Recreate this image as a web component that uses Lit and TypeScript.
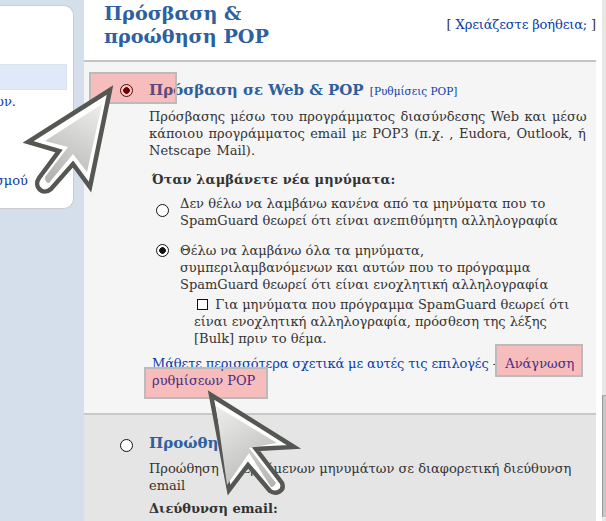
import { LitElement, html, css, svg } from "lit";
import { customElement } from "lit/decorators.js";

function arrow(outline: string, inner: string, g: string) {
  return svg`
    <path d=${outline} fill="#fff" stroke="#555753" stroke-width="4.5" stroke-linejoin="miter" stroke-miterlimit="10"></path>
    <path d=${inner} fill=${`url(#${g})`}></path>`;
}

@customElement("app-root")
export class AppRoot extends LitElement {
  static styles = css`
    :host { display: block; width: 606px; height: 521px; position: relative; overflow: hidden; font-family: "DejaVu Serif", serif; font-size: 13px; line-height: 17px; color: #333; background: #fff; }
    * { box-sizing: border-box; }
    .page { display: flex; height: 521px; }
    .side { width: 84px; flex: none; background: #d5deeb; padding-top: 5px; overflow: hidden; }
    .card { width: 74px; height: 204px; background: #fff; border: 1px solid #ccc; border-left: 0; border-radius: 0 10px 10px 0; padding-top: 58px; overflow: hidden; }
    .sel { width: 67px; height: 26px; background: #e0e9fa; border: 1px solid #dce3ee; border-left: 0; }
    .s1 { display: flex; justify-content: flex-end; padding-right: 57px; margin-top: 3px; color: #0a3aa8; white-space: nowrap; }
    .s2 { display: flex; justify-content: flex-end; margin-top: 62px; padding-right: 45px; color: #0a3aa8; white-space: nowrap; }
    .main { width: 512px; flex: none; display: flex; flex-direction: column; }
    .head { height: 62px; display: flex; justify-content: space-between; align-items: flex-start; padding: 0 0 0 20px; border-bottom: 2px solid #c4c4c4; }
    h1 { margin: 0; font-size: 19.2px; line-height: 23px; font-weight: bold; color: #2e5f9f; width: 190px; padding-top: 2px; }
    .help { white-space: nowrap; color: #333; margin-top: 16px; letter-spacing: -0.14px; }
    a { color: #0a3aa8; text-decoration: none; }
    .sec { display: grid; grid-template-columns: 65px 1fr; }
    .one { height: 353px; background: #f5f5f5; border-bottom: 2px solid #c9c9c9; padding-top: 19px; }
    .two { flex: 1; background: #e5e5e5; padding-top: 19px; }
    .rad { appearance: none; margin: 0; width: 13px; height: 13px; border: 1.5px solid #111; border-radius: 50%; background: #fff; display: block; }
    .rad.on { background: radial-gradient(circle, #111 0 3px, #fff 3.6px); }
    .rad.dark { background: radial-gradient(circle, #400 0 3px, #fff 3.6px); margin-top: 1px; }
    .rad.off2 { margin-top: 3px; }
    .cellr { padding-left: 36px; padding-top: 2px; }
    h2 { margin: 0; font-size: 15px; line-height: 18px; font-weight: bold; color: #2e5f9f; white-space: nowrap; }
    h2 a { font-size: 10.5px; font-weight: normal; margin-left: 1px; }
    p { margin: 0; }
    .desc { margin-top: 8px; padding-right: 12px; }
    .one .desc { word-spacing: 1.3px; padding-right: 0; }
    .two .desc { margin-top: 8px; }
    .when { margin: 12px 0 0 3px; font-weight: bold; letter-spacing: 0.1px; }
    .opt { display: flex; margin-top: 7px; padding-left: 7px; gap: 11px; align-items: flex-start; padding-right: 12px; }
    .opt .rad { margin-top: 2px; flex: none; }
    .opt.first .rad { margin-top: 9px; }
    .opt.second { margin-top: 13px; }
    .chk { margin: 3px 0 0 45px; padding-right: 24px; }
    .box { display: inline-block; width: 11px; height: 11px; border: 1px solid #111; background: #fff; vertical-align: -1px; margin: 0 3px; }
    .more { margin: 8px 0 0 3px; padding-right: 12px; }
    .more .lead { letter-spacing: -0.13px; }
    .more .read { margin-left: 4px; }
    .label { margin-top: 6px; font-weight: bold; }
    .gut { width: 6px; flex: none; background: #fff; }
    .track { width: 4px; flex: none; background: #e8e8e8; padding-top: 395px; }
    .thumb { height: 122px; background: #c8c8c8; border-left: 1px solid #999; border-top: 1px solid #aaa; }
    .hl { position: absolute; background: rgba(255, 0, 0, 0.23); border: 2px solid #bbb; }
    .hl1 { left: 89px; top: 72px; width: 88px; height: 32px; }
    .hl2 { left: 495px; top: 344px; width: 88px; height: 33px; }
    .hl3 { left: 144px; top: 367px; width: 124px; height: 32px; }
    .arrows { position: absolute; inset: 0; pointer-events: none; }
  `;

  render() {
    return html`
      <div class="page">
        <div class="side">
          <div class="card">
            <div class="sel"></div>
            <div class="s1"><span>ων.</span></div>
            <div class="s2"><span>σμού</span></div>
          </div>
        </div>
        <div class="main">
          <div class="head">
            <h1>Πρόσβαση &amp; προώθηση POP</h1>
            <span class="help">[ <a>Χρειάζεστε βοήθεια;</a> ]</span>
          </div>
          <div class="sec one">
            <div class="cellr"><span class="rad dark"></span></div>
            <div>
              <h2>Πρόσβαση σε Web &amp; POP <a>[Ρυθμίσεις POP]</a></h2>
              <p class="desc">Πρόσβασης μέσω του προγράμματος διασύνδεσης Web και μέσω κάποιου προγράμματος email με POP3 (π.χ. , Eudora, Outlook, ή Netscape Mail).</p>
              <p class="when">Όταν λαμβάνετε νέα μηνύματα:</p>
              <div class="opt first">
                <span class="rad"></span>
                <span>Δεν θέλω να λαμβάνω κανένα από τα μηνύματα που το SpamGuard θεωρεί ότι είναι ανεπιθύμητη αλληλογραφία</span>
              </div>
              <div class="opt second">
                <span class="rad on"></span>
                <span>Θέλω να λαμβάνω όλα τα μηνύματα,<br />συμπεριλαμβανόμενων και αυτών που το πρόγραμμα SpamGuard θεωρεί ότι είναι ενοχλητική αλληλογραφία</span>
              </div>
              <div class="chk"><span class="box"></span> Για μηνύματα που πρόγραμμα SpamGuard θεωρεί ότι είναι ενοχλητική αλληλογραφία, πρόσθεση της λέξης [Bulk] πριν το θέμα.</div>
              <p class="more"><a class="lead">Μάθετε περισσότερα σχετικά με αυτές τις επιλογές</a> - <a class="read">Ανάγνωση ρυθμίσεων POP</a></p>
            </div>
          </div>
          <div class="sec two">
            <div class="cellr"><span class="rad off2"></span></div>
            <div>
              <h2>Προώθηση</h2>
              <p class="desc">Προώθηση εισερχόμενων μηνυμάτων σε διαφορετική διεύθυνση email</p>
              <p class="label">Διεύθυνση email:</p>
            </div>
          </div>
        </div>
        <div class="gut"></div>
        <div class="track"><div class="thumb"></div></div>
      </div>
      <div class="hl hl1"></div>
      <div class="hl hl2"></div>
      <div class="hl hl3"></div>
      <svg class="arrows" width="606" height="521" viewBox="0 0 606 521">
        <defs>
          <linearGradient id="g1" x1="100" y1="104" x2="55" y2="180" gradientUnits="userSpaceOnUse">
            <stop offset="0" stop-color="#eeeeec"></stop><stop offset="1" stop-color="#b4b4b2"></stop>
          </linearGradient>
          <linearGradient id="g2" x1="216" y1="406" x2="272" y2="486" gradientUnits="userSpaceOnUse">
            <stop offset="0" stop-color="#eeeeec"></stop><stop offset="1" stop-color="#b4b4b2"></stop>
          </linearGradient>
        </defs>
        ${arrow("M110 90 L28 142 L59 151 L39 178 C33 187 43 196 51 189 L73 164 L90 187 Z", "M102 104 L45 141 L68 147 L45 177 Q45 183 49 183 L73 154 L87 172 Z", "g1")}
        ${arrow("M211 395 L294 447 L256 449 L282 483 C285 491 276 495 270 491 L248 465 L229 490 Z", "M216 406 L277 443 L249 448 L276 483 Q274 487 271 487 L249 453 L227 485 Z", "g2")}
      </svg>
    `;
  }
}
